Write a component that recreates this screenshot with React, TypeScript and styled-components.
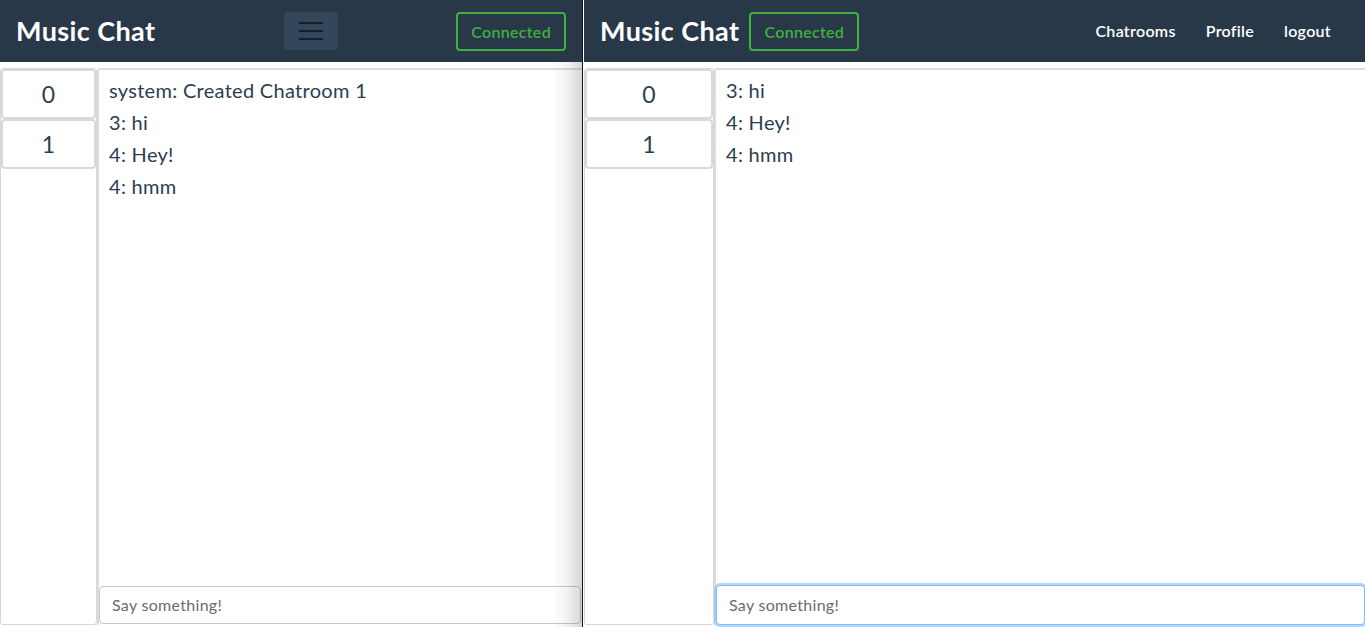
import styled, { createGlobalStyle, css } from "styled-components";

const GlobalStyle = createGlobalStyle`
  html, body {
    margin: 0;
    padding: 0;
    height: 100%;
    background: #ffffff;
  }
  body {
    font-family: Lato, "Noto Sans", sans-serif;
    color: #2c3e50;
    overflow: hidden;
  }
  #root {
    height: 100%;
  }
`;

interface WindowData {
  rooms: string[];
  messages: string[];
  wide: boolean;
}

const leftWindow: WindowData = {
  rooms: ["0", "1"],
  messages: ["system: Created Chatroom 1", "3: hi", "4: Hey!", "4: hmm"],
  wide: false,
};

const rightWindow: WindowData = {
  rooms: ["0", "1"],
  messages: ["3: hi", "4: Hey!", "4: hmm"],
  wide: true,
};

const links = ["Chatrooms", "Profile", "logout"];

const Hamburger = () => (
  <svg width="26" height="20" viewBox="0 0 26 20">
    <g stroke="#15202c" strokeWidth="2">
      <line x1="1" y1="2" x2="25" y2="2" />
      <line x1="1" y1="10" x2="25" y2="10" />
      <line x1="1" y1="18" x2="25" y2="18" />
    </g>
  </svg>
);

const ChatBody = ({ data, focused }: { data: WindowData; focused: boolean }) => (
  <Body>
    <Sidebar $wide={data.wide}>
      {data.rooms.map((room) => (
        <RoomBtn key={room}>{room}</RoomBtn>
      ))}
    </Sidebar>
    <ChatPanel>
      <Messages>
        {data.messages.map((msg, key) => (
          <Message key={key}>{msg}</Message>
        ))}
      </Messages>
      <ChatInput placeholder="Say something!" $focused={focused} />
    </ChatPanel>
  </Body>
);

const App = () => {
  return (
    <>
      <GlobalStyle />
      <Screen>
        <LeftWindow>
          <Navbar $spread>
            <Brand>Music Chat</Brand>
            <Toggler>
              <Hamburger />
            </Toggler>
            <Status>Connected</Status>
          </Navbar>
          <ChatBody data={leftWindow} focused={false} />
        </LeftWindow>
        <Divider />
        <RightWindow>
          <Navbar>
            <Brand>Music Chat</Brand>
            <Status>Connected</Status>
            <NavLinks>
              {links.map((link) => (
                <NavLink key={link}>{link}</NavLink>
              ))}
            </NavLinks>
          </Navbar>
          <ChatBody data={rightWindow} focused={true} />
        </RightWindow>
      </Screen>
    </>
  );
};

const Screen = styled.div`
  display: flex;
  height: 627px;
  width: 1365px;
`;

const WindowBase = styled.div`
  display: flex;
  flex-direction: column;
  height: 100%;
  position: relative;
  overflow: hidden;
`;

const LeftWindow = styled(WindowBase)`
  width: 582px;
  &::after {
    content: "";
    position: absolute;
    top: 62px;
    right: 0;
    bottom: 0;
    width: 30px;
    background: linear-gradient(
      to right,
      rgba(0, 0, 0, 0) 0%,
      rgba(0, 0, 0, 0.05) 50%,
      rgba(0, 0, 0, 0.16) 100%
    );
    pointer-events: none;
  }
`;

const RightWindow = styled(WindowBase)`
  flex: 1;
  margin-left: 1px;
`;

const Divider = styled.div`
  width: 1px;
  background: #111;
`;

const Navbar = styled.nav<{ $spread?: boolean }>`
  height: 62px;
  flex-shrink: 0;
  box-sizing: border-box;
  background: #283849;
  display: flex;
  align-items: center;
  padding: 0 16px 2px;
  gap: 10px;
  ${(props) =>
    props.$spread &&
    css`
      justify-content: space-between;
    `}
`;

const Brand = styled.div`
  color: #ffffff;
  font-size: 27px;
  font-weight: 700;
  letter-spacing: 0.4px;
`;

const Toggler = styled.button`
  width: 54px;
  height: 38px;
  border: none;
  border-radius: 4px;
  background: #33465a;
  display: flex;
  align-items: center;
  justify-content: center;
  padding: 0;
  margin-left: 10px;
  margin-top: 2px;
`;

const Status = styled.div`
  border: 2px solid #3fb13f;
  border-radius: 4px;
  color: #3fb13f;
  font-size: 16px;
  font-weight: 600;
  height: 39px;
  box-sizing: border-box;
  padding: 0 13px;
  display: flex;
  align-items: center;
  letter-spacing: 0.3px;
  margin-top: 2px;
`;

const NavLinks = styled.div`
  margin-left: auto;
  display: flex;
  align-items: center;
`;

const NavLink = styled.a`
  color: #ffffff;
  font-size: 16px;
  font-weight: 600;
  letter-spacing: 0.3px;
  padding: 0 15px;
  cursor: pointer;
  &:last-child {
    padding-right: 18px;
  }
`;

const Body = styled.div`
  flex: 1;
  display: flex;
  margin-top: 6px;
  margin-bottom: 2px;
  min-height: 0;
`;

const Sidebar = styled.div<{ $wide: boolean }>`
  width: ${(props) => (props.$wide ? "130px" : "97px")};
  flex-shrink: 0;
  box-sizing: border-box;
  border: 1px solid #d6d6d6;
  border-radius: 3px;
  display: flex;
  flex-direction: column;
`;

const RoomBtn = styled.div`
  height: 50px;
  box-sizing: border-box;
  border: 2px solid #d9d9d9;
  border-radius: 4px;
  display: flex;
  align-items: center;
  justify-content: center;
  font-size: 23px;
  color: #2c3e50;
  background: #ffffff;
  cursor: pointer;
`;

const ChatPanel = styled.div`
  flex: 1;
  display: flex;
  flex-direction: column;
  border-top: 2px solid #dcdcdc;
  border-left: 2px solid #dcdcdc;
  border-top-left-radius: 3px;
  min-width: 0;
`;

const Messages = styled.div`
  flex: 1;
  padding: 4px 10px 0;
  overflow: hidden;
`;

const Message = styled.div`
  font-size: 20px;
  line-height: 32px;
  letter-spacing: 0.3px;
  color: #2c3e50;
`;

const ChatInput = styled.input<{ $focused: boolean }>`
  height: 38px;
  box-sizing: border-box;
  margin: 0 1px 1px 0;
  border: 1px solid #c8c8c8;
  border-radius: 4px;
  padding: 0 12px 2px;
  font-family: Lato, "Noto Sans", sans-serif;
  font-size: 16px;
  letter-spacing: 0.3px;
  color: #495057;
  outline: none;
  &::placeholder {
    color: #6c6c6c;
  }
  ${(props) =>
    props.$focused &&
    css`
      height: 40px;
      margin: 0;
      border-color: #80bdff;
      box-shadow: 0 0 0 2px rgba(128, 189, 255, 0.6);
    `}
`;

export default App;
